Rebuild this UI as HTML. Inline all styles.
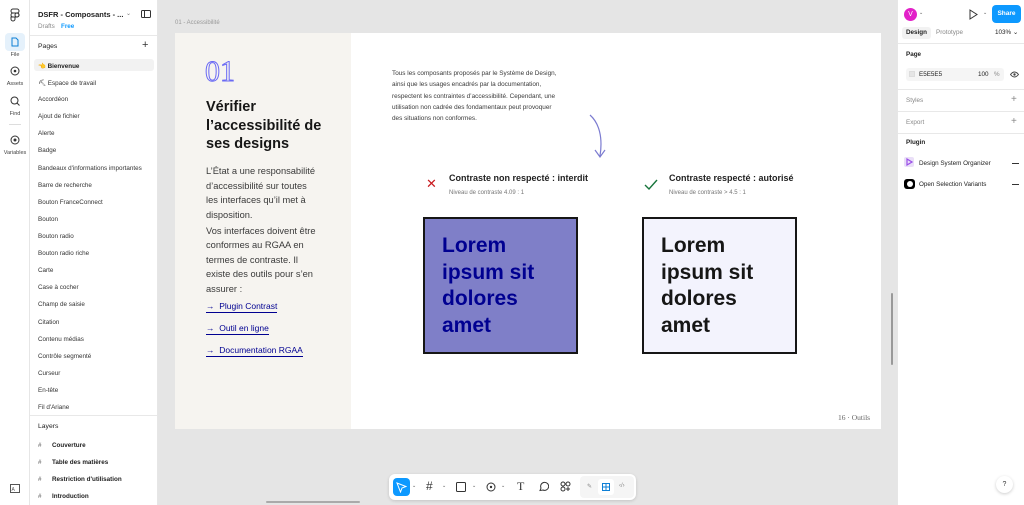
<!DOCTYPE html>
<html><head><meta charset="utf-8">
<style>
*{margin:0;padding:0;box-sizing:border-box}
body{width:1024px;height:505px;overflow:hidden;font-family:"Liberation Sans",sans-serif;background:#e5e5e5;position:relative;color:#222}
.abs{position:absolute}
#rail{left:0;top:0;width:30px;height:505px;background:#fff;border-right:1px solid #e6e6e6}
#lp{left:30px;top:0;width:128px;height:505px;background:#fff;border-right:1px solid #e6e6e6}
#rp{left:897px;top:0;width:127px;height:505px;background:#fff;border-left:1px solid #e6e6e6}
.pg{position:absolute;left:8px;font-size:6.3px;color:#333;white-space:nowrap}
.ly{position:absolute;left:8px;font-size:6.3px;color:#222;font-weight:bold;white-space:nowrap}
.ly b{display:inline-block;width:14px;color:#555;font-weight:normal}
.rl{font-size:5.5px;color:#444;position:absolute;width:30px;text-align:center;left:0}
.hr{position:absolute;left:0;right:0;height:1px;background:#e8e8e8}
.sm{font-size:6.3px;position:absolute;white-space:nowrap}
#frame{left:175px;top:33px;width:706px;height:396px;background:#fff}
#beige{left:0;top:0;width:176px;height:396px;background:#f6f4f0}
.lnk{position:absolute;left:31px;font-size:8.5px;color:#000091;border-bottom:1px solid #000091;padding-bottom:1px;white-space:nowrap}
.box{position:absolute;width:155px;height:137px;border:2px solid #161616;font-size:21px;font-weight:bold;line-height:26.7px;padding:14px 0 0 17px}
</style></head><body>

<div id="rail" class="abs">
  <svg class="abs" style="left:10px;top:8px" width="10" height="14" viewBox="0 0 10 14" fill="none" stroke="#333" stroke-width="1"><rect x="1" y="1" width="8" height="4" rx="2"/><rect x="1" y="5" width="8" height="4" rx="2"/><circle cx="7" cy="7" r="2"/><path d="M1 9h4v2a2 2 0 0 1-4 0z"/></svg>
  <div class="abs" style="left:5px;top:33px;width:20px;height:18px;background:#e5f1fb;border-radius:4px"></div>
  <svg class="abs" style="left:11px;top:37px" width="8" height="10" viewBox="0 0 8 10" fill="none" stroke="#0d7fd6"><path d="M1 1h4l2 2v6H1z"/></svg>
  <div class="rl" style="top:52px">File</div>
  <svg class="abs" style="left:10px;top:66px" width="10" height="10"><circle cx="5" cy="5" r="4" fill="none" stroke="#333"/><circle cx="5" cy="5" r="1.3" fill="#333"/></svg>
  <div class="rl" style="top:81px">Assets</div>
  <svg class="abs" style="left:10px;top:96px" width="10" height="10"><circle cx="4.5" cy="4.5" r="3.5" fill="none" stroke="#333"/><path d="M7 7l2.5 2.5" stroke="#333"/></svg>
  <div class="rl" style="top:111px">Find</div>
  <div class="abs" style="left:9px;top:124px;width:12px;height:1px;background:#ddd"></div>
  <svg class="abs" style="left:10px;top:135px" width="10" height="10"><circle cx="5" cy="5" r="4" fill="none" stroke="#333"/><circle cx="5" cy="5" r="1.5" fill="#333"/></svg>
  <div class="rl" style="top:150px">Variables</div>
  <svg class="abs" style="left:10px;top:484px" width="10" height="9"><rect x="0.5" y="0.5" width="9" height="8" fill="none" stroke="#555"/><text x="1.5" y="7" font-size="5" fill="#555">A</text></svg>
</div>

<div id="lp" class="abs">
  <div class="sm" style="left:8px;top:10px;font-size:7.5px;font-weight:bold;color:#222">DSFR - Composants - ...</div>
  <div class="sm" style="left:96px;top:10px;font-size:6px;color:#777">⌄</div>
  <svg class="abs" style="left:111px;top:10px" width="10" height="8"><rect x="0.5" y="0.5" width="9" height="7" rx="1" fill="none" stroke="#333"/><path d="M3.5 0.5v7" stroke="#333"/></svg>
  <div class="sm" style="left:8px;top:23px;color:#888">Drafts</div>
  <div class="sm" style="left:31px;top:23px;color:#0d99ff;font-weight:bold">Free</div>
  <div class="hr" style="top:35px"></div>
  <div class="sm" style="left:8px;top:43px;font-size:6.8px;color:#222">Pages</div>
  <div class="sm" style="left:112px;top:39px;font-size:11px;color:#333">+</div>
  <div class="abs" style="left:4px;top:59px;width:120px;height:12px;background:#f2f2f2;border-radius:3px"></div>
  <div class="pg" style="top:62px;font-weight:bold;color:#222"><span style="color:#e8a030">👈</span> Bienvenue</div>
  <div class="pg" style="top:79px">⛏ Espace de travail</div>
  <div class="pg" style="top:96px">Accordéon</div>
  <div class="pg" style="top:113px">Ajout de fichier</div>
  <div class="pg" style="top:130px">Alerte</div>
  <div class="pg" style="top:147px">Badge</div>
  <div class="pg" style="top:165px">Bandeaux d'informations importantes</div>
  <div class="pg" style="top:182px">Barre de recherche</div>
  <div class="pg" style="top:199px">Bouton FranceConnect</div>
  <div class="pg" style="top:216px">Bouton</div>
  <div class="pg" style="top:233px">Bouton radio</div>
  <div class="pg" style="top:250px">Bouton radio riche</div>
  <div class="pg" style="top:267px">Carte</div>
  <div class="pg" style="top:284px">Case à cocher</div>
  <div class="pg" style="top:301px">Champ de saisie</div>
  <div class="pg" style="top:319px">Citation</div>
  <div class="pg" style="top:336px">Contenu médias</div>
  <div class="pg" style="top:353px">Contrôle segmenté</div>
  <div class="pg" style="top:370px">Curseur</div>
  <div class="pg" style="top:387px">En-tête</div>
  <div class="pg" style="top:404px">Fil d'Ariane</div>
  <div class="hr" style="top:415px"></div>
  <div class="sm" style="left:8px;top:423px;font-size:6.8px">Layers</div>
  <div class="ly" style="top:442px"><b>#</b>Couverture</div>
  <div class="ly" style="top:459px"><b>#</b>Table des matières</div>
  <div class="ly" style="top:476px"><b>#</b>Restriction d'utilisation</div>
  <div class="ly" style="top:493px"><b>#</b>Introduction</div>
</div>

<div class="sm" style="left:175px;top:20px;font-size:6px;color:#999">01 - Accessibilité</div>

<div id="frame" class="abs">
  <div id="beige" class="abs"></div>
  <div class="abs" style="left:30px;top:24px;font-family:'Liberation Serif',serif;font-size:30px;color:#f6f4f0;-webkit-text-stroke:1px #6a6af4;line-height:30px">01</div>
  <div class="abs" style="left:31px;top:65px;font-size:14.5px;font-weight:bold;line-height:18.5px;color:#161616">Vérifier<br>l’accessibilité de<br>ses designs</div>
  <div class="abs" style="left:31px;top:131px;font-size:9.3px;line-height:14.6px;color:#3a3a3a">L’État a une responsabilité<br>d’accessibilité sur toutes<br>les interfaces qu’il met à<br>disposition.</div>
  <div class="abs" style="left:31px;top:191px;font-size:9.3px;line-height:14.4px;color:#3a3a3a">Vos interfaces doivent être<br>conformes au RGAA en<br>termes de contraste. Il<br>existe des outils pour s’en<br>assurer :</div>
  <div class="lnk" style="top:268px">→&nbsp;&nbsp;Plugin Contrast</div>
  <div class="lnk" style="top:290px">→&nbsp;&nbsp;Outil en ligne</div>
  <div class="lnk" style="top:312px">→&nbsp;&nbsp;Documentation RGAA</div>

  <div class="abs" style="left:217px;top:35px;font-size:6.4px;line-height:11.3px;color:#3a3a3a">Tous les composants proposés par le Système de Design,<br>ainsi que les usages encadrés par la documentation,<br>respectent les contraintes d’accessibilité. Cependant, une<br>utilisation non cadrée des fondamentaux peut provoquer<br>des situations non conformes.</div>
  <svg class="abs" style="left:410px;top:80px" width="25" height="46" viewBox="0 0 25 46" fill="none" stroke="#7b7bd0" stroke-width="1.2"><path d="M5 2c9 8 13 22 10 41"/><path d="M10 37l5 7 5-7"/></svg>

  <div class="abs" style="left:251px;top:144px;color:#c9191e;font-size:13px;line-height:14px">✕</div>
  <div class="abs" style="left:274px;top:140px;font-size:9px;font-weight:bold;color:#222">Contraste non respecté : interdit</div>
  <div class="abs" style="left:274px;top:157px;font-size:6px;color:#777">Niveau de contraste 4.09 : 1</div>
  <svg class="abs" style="left:469px;top:146px" width="14" height="11"><path d="M1 6l4 4 8-9" fill="none" stroke="#18753c" stroke-width="1.4"/></svg>
  <div class="abs" style="left:494px;top:140px;font-size:9px;font-weight:bold;color:#222">Contraste respecté : autorisé</div>
  <div class="abs" style="left:494px;top:157px;font-size:6px;color:#777">Niveau de contraste &gt; 4.5 : 1</div>

  <div class="box" style="left:248px;top:184px;background:#7f7fc8;color:#000091">Lorem<br>ipsum sit<br>dolores<br>amet</div>
  <div class="box" style="left:467px;top:184px;background:#f3f3fd;color:#161616">Lorem<br>ipsum sit<br>dolores<br>amet</div>

  <div class="abs" style="left:663px;top:380px;font-family:'Liberation Serif',serif;font-size:7.5px;color:#666">16 · Outils</div>
</div>

<div class="abs" style="left:891px;top:293px;width:2px;height:72px;background:#999;border-radius:1px"></div>
<div class="abs" style="left:266px;top:501px;width:94px;height:2px;background:#aaa;border-radius:1px"></div>

<div class="abs" style="left:389px;top:474px;width:247px;height:26px;background:#fff;border-radius:6px;box-shadow:0 1px 3px rgba(0,0,0,.15)">
  <div class="abs" style="left:4px;top:4px;width:17px;height:18px;background:#0d99ff;border-radius:4px"></div>
  <svg class="abs" style="left:7px;top:8px" width="11" height="11"><path d="M1 1l9 3.5-4 1.5-1.5 4z" fill="none" stroke="#fff" stroke-width="1"/></svg>
  <div class="sm" style="left:23px;top:9px;font-size:5px;color:#555">⌄</div>
  <div class="sm" style="left:37px;top:5px;font-size:12px;color:#333">#</div>
  <div class="sm" style="left:53px;top:9px;font-size:5px;color:#555">⌄</div>
  <svg class="abs" style="left:67px;top:8px" width="10" height="10"><rect x="0.5" y="0.5" width="9" height="9" rx="1" fill="none" stroke="#333"/></svg>
  <div class="sm" style="left:83px;top:9px;font-size:5px;color:#555">⌄</div>
  <svg class="abs" style="left:97px;top:7px" width="11" height="11"><circle cx="5" cy="6" r="4" fill="none" stroke="#333"/><circle cx="5" cy="6" r="1.2" fill="#333"/></svg>
  <div class="sm" style="left:112px;top:9px;font-size:5px;color:#555">⌄</div>
  <div class="sm" style="left:128px;top:5px;font-size:12px;color:#333;font-family:'Liberation Serif',serif">T</div>
  <svg class="abs" style="left:149px;top:7px" width="11" height="11"><path d="M2 9.5l1-2.5a4 4 0 1 1 2 2z" fill="none" stroke="#333"/></svg>
  <svg class="abs" style="left:171px;top:7px" width="11" height="11" fill="none" stroke="#333"><circle cx="3" cy="3" r="2"/><circle cx="8" cy="3" r="2"/><circle cx="3" cy="8" r="2"/><path d="M8 6v4M6 8h4"/></svg>
  <div class="abs" style="left:191px;top:2px;width:54px;height:22px;background:#f5f5f5;border-radius:4px"></div>
  <div class="abs" style="left:209px;top:5px;width:16px;height:16px;background:#fff;border-radius:3px"></div>
  <div class="sm" style="left:198px;top:9px;font-size:6px;color:#888">✎</div>
  <svg class="abs" style="left:213px;top:9px" width="8" height="8" fill="none" stroke="#0d7fd6"><rect x="0.5" y="0.5" width="7" height="7"/><path d="M0.5 4h7M4 0.5v7"/></svg>
  <div class="sm" style="left:230px;top:9px;font-size:6px;color:#888">‹/›</div>
</div>

<div id="rp" class="abs">
  <div class="abs" style="left:6px;top:8px;width:13px;height:13px;border-radius:50%;background:#e221c8;color:#fff;font-size:7px;text-align:center;line-height:13px">V</div>
  <div class="sm" style="left:21px;top:10px;font-size:5px;color:#555">⌄</div>
  <svg class="abs" style="left:71px;top:9px" width="9" height="11"><path d="M1 1l7 4.5-7 4.5z" fill="none" stroke="#333"/></svg>
  <div class="sm" style="left:85px;top:10px;font-size:5px;color:#555">⌄</div>
  <div class="abs" style="left:94px;top:5px;width:29px;height:18px;background:#0d99ff;border-radius:4px;color:#fff;font-size:6.5px;font-weight:bold;text-align:center;line-height:18px">Share</div>
  <div class="abs" style="left:4px;top:27px;width:29px;height:12px;background:#f2f2f2;border-radius:3px"></div>
  <div class="sm" style="left:8px;top:29px;font-weight:bold">Design</div>
  <div class="sm" style="left:38px;top:29px;color:#888">Prototype</div>
  <div class="sm" style="left:97px;top:29px">103% ⌄</div>
  <div class="hr" style="top:43px"></div>
  <div class="sm" style="left:8px;top:51px;font-weight:bold">Page</div>
  <div class="abs" style="left:8px;top:68px;width:98px;height:13px;background:#f5f5f5;border-radius:3px"></div>
  <div class="abs" style="left:11px;top:71px;width:6px;height:6px;background:#e5e5e5;border:1px solid #ddd"></div>
  <div class="sm" style="left:21px;top:71px">E5E5E5</div>
  <div class="sm" style="left:80px;top:71px">100</div>
  <div class="sm" style="left:96px;top:71px;color:#888">%</div>
  <svg class="abs" style="left:112px;top:71px" width="9" height="7"><path d="M0.5 3.5Q4.5 -1.5 8.5 3.5Q4.5 8.5 0.5 3.5z" fill="none" stroke="#444"/><circle cx="4.5" cy="3.5" r="1.2" fill="#444"/></svg>
  <div class="hr" style="top:89px"></div>
  <div class="sm" style="left:8px;top:97px;color:#888">Styles</div>
  <div class="sm" style="left:113px;top:94px;font-size:10px;color:#888">+</div>
  <div class="hr" style="top:111px"></div>
  <div class="sm" style="left:8px;top:119px;color:#888">Export</div>
  <div class="sm" style="left:113px;top:116px;font-size:10px;color:#888">+</div>
  <div class="hr" style="top:133px"></div>
  <div class="sm" style="left:8px;top:139px;font-weight:bold">Plugin</div>
  <div class="abs" style="left:6px;top:157px;width:10px;height:10px;background:#eadff8;border-radius:2px"></div>
  <svg class="abs" style="left:8px;top:158px" width="7" height="8"><path d="M1 1l5 3-5 3z" fill="none" stroke="#9a4fe8" stroke-width="1.2"/></svg>
  <div class="sm" style="left:21px;top:160px">Design System Organizer</div>
  <div class="abs" style="left:114px;top:163px;width:7px;height:1px;background:#333"></div>
  <div class="abs" style="left:6px;top:179px;width:11px;height:10px;background:#000;border-radius:3px"></div>
  <div class="abs" style="left:9px;top:181px;width:6px;height:6px;border-radius:50%;background:#fff"></div>
  <div class="sm" style="left:21px;top:181px">Open Selection Variants</div>
  <div class="abs" style="left:114px;top:184px;width:7px;height:1px;background:#333"></div>
  <div class="abs" style="left:98px;top:476px;width:17px;height:17px;border-radius:50%;background:#fff;box-shadow:0 1px 3px rgba(0,0,0,.2);font-size:7px;text-align:center;line-height:17px;color:#333">?</div>
</div>
</body></html>
